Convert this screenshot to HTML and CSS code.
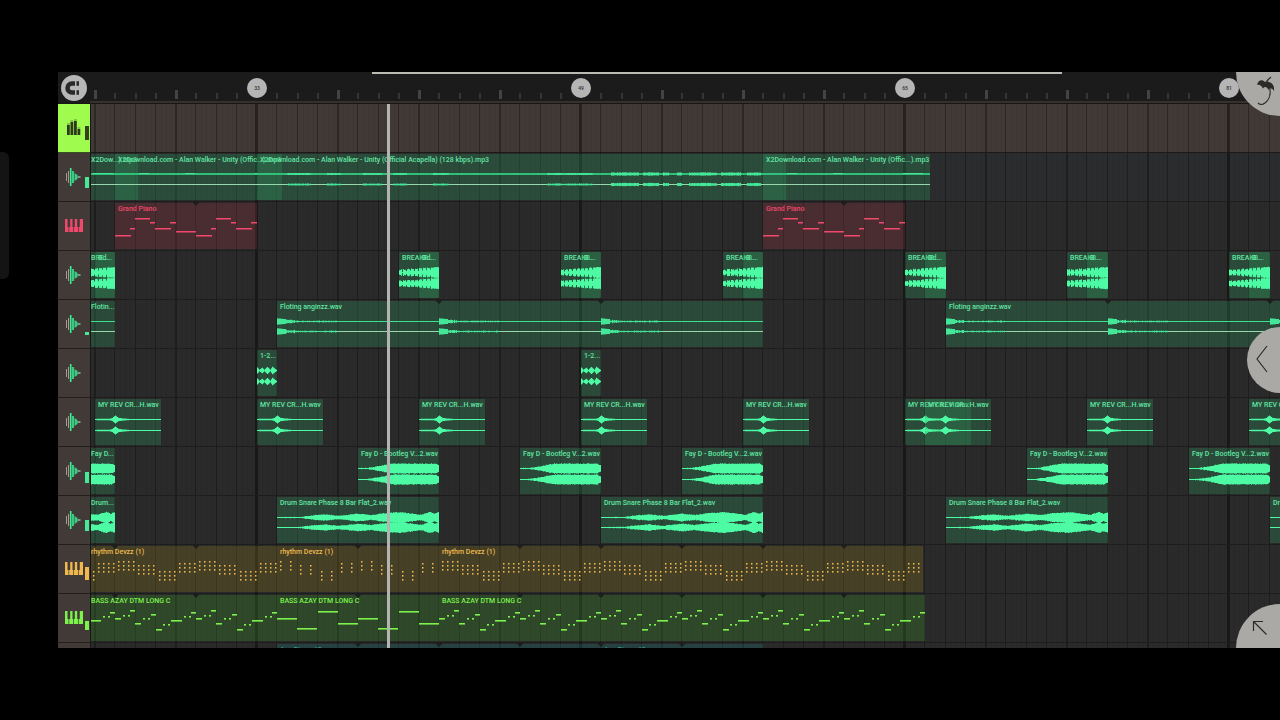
FILE: index.html
```html
<!DOCTYPE html>
<html lang="en">
<head>
<meta charset="utf-8">
<meta name="viewport" content="width=device-width, initial-scale=1">
<title>Playlist</title>
<link rel="stylesheet" href="styles.css">
</head>
<body>
<div class="edge-handle"></div>
<main class="app">
  <header class="ruler">
    <button class="snap" type="button" aria-label="Snap">
      <svg viewBox="0 0 26 26" width="26" height="26" aria-hidden="true">
        <path d="M14 8.500H11a4.500 4.500 0 0 0 0 9H14" fill="none" stroke="#2a2a2a" stroke-width="4.500"/>
        <path d="M15.500 6.200h2.500v4.600h-2.500zM15.500 15.200h2.500v4.600h-2.500z" fill="#2a2a2a"/>
      </svg>
    </button>
    <div class="timeline" id="timeline"></div>
    <div class="overview"></div>
  </header>
  <section class="tracks" id="tracks"></section>
  <div class="playhead"></div>
  <button class="corner corner-top" type="button" aria-label="Tools">
    <svg viewBox="0 0 24 32" width="24" height="32" aria-hidden="true">
      <path d="M3 9C4 4 8 3 11 6C15 5 21 7 20 15C18 12 16 12 14.500 14C13 11 11 10 9 12.500C7.500 9 5 8 3 9Z" fill="#2d2b2a"/>
      <path d="M17 1q-4 3-5 6M16 13c1 7-2 12-5 14q-4 3-7 0" fill="none" stroke="#2d2b2a" stroke-width="1.200"/>
    </svg>
  </button>
  <button class="corner corner-mid" type="button" aria-label="Open panel">
    <svg viewBox="0 0 12 28" width="12" height="28" aria-hidden="true"><path d="M11 1L1 14L11 27" fill="none" stroke="#2d2b2a" stroke-width="1.200"/></svg>
  </button>
  <button class="corner corner-bottom" type="button" aria-label="Zoom">
    <svg viewBox="0 0 16 16" width="16" height="16" aria-hidden="true"><path d="M1.500 11V1.500H11M1.500 1.500L14.500 14.500" fill="none" stroke="#2d2b2a" stroke-width="1.200"/></svg>
  </button>
</main>
<script src="playlist.js"></script>
</body>
</html>
```
FILE: styles.css
```css
* { box-sizing: border-box; }

body {
  margin: 0;
  height: 100vh;
  padding: 72px 0 72px 58px;
  background: #000;
  font-family: Roboto, "Liberation Sans", sans-serif;
  overflow: hidden;
}

button { border: 0; padding: 0; margin: 0; background: none; color: inherit; font: inherit; cursor: pointer; }
svg { display: block; }

.edge-handle {
  position: absolute;
  left: 0;
  top: 152px;
  width: 9px;
  height: 127px;
  border-radius: 0 6px 6px 0;
  background: #141414;
}

.app {
  position: relative;
  display: flex;
  flex-direction: column;
  height: 100%;
  overflow: hidden;
  background: #292929;
}

/* Ruler */
.ruler {
  position: relative;
  display: flex;
  flex: 0 0 32px;
  background: #1b1b1b;
  border-bottom: 1px solid #1a1614;
}
.snap {
  flex: 0 0 26px;
  height: 26px;
  margin: 3px 3px 0 3px;
  border-radius: 50%;
  background: #b7b7b7;
}
.timeline {
  position: relative;
  flex: 1;
  overflow: hidden;
  border-bottom: 2px solid #38302d;
}
.timeline svg { position: absolute; left: 0; top: 0; }
.marker {
  position: absolute;
  top: 6px;
  width: 20px;
  height: 20px;
  margin-left: -10px;
  border-radius: 50%;
  background: #b5b5b5;
  color: #333;
  font-size: 5px;
  font-weight: 500;
  line-height: 20px;
  text-align: center;
}
.overview {
  position: absolute;
  left: 314px;
  right: 218px;
  top: 0;
  height: 2px;
  background: #b9bab2;
}

/* Tracks */
.tracks { flex: 1; min-height: 0; overflow: hidden; }
.track { display: flex; height: 49px; }
.head {
  display: flex;
  flex: 0 0 32px;
  background: #423a37;
  border-bottom: 1px solid #241f1d;
}
.icon { flex: 0 0 27px; height: 48px; }
.icon svg { margin-left: 7px; }
.meter { width: 4px; background: currentColor; }
.lane {
  position: relative;
  flex: 1;
  overflow: hidden;
  background: #2a2a2a;
  border-bottom: 1px solid #1d1d1d;
  border-left: 1px solid #171717;
}
.grid { position: absolute; left: -1px; top: 0; }

.master .head { background: #9ffc4e; color: #33401c; border-bottom-color: #35511d; }
.master .lane { background: #403935; border-bottom-color: #1c1917; }
.first .lane { background: #2a2c2d; }

.audio { color: #45e99a; }
.piano-red { color: #f0486c; }
.piano-gold { color: #f0b94e; }
.piano-lime { color: #7cf24c; }
.teal { color: #2fa695; }

.clip { position: absolute; top: 1px; height: 46px; }
.clip svg { position: absolute; left: 0; top: 0; }
.audio .clip { background: rgba(45, 150, 92, 0.3); }
.piano-red .clip { background: rgba(200, 62, 75, 0.2); }
.piano-gold .clip { background: rgba(144, 126, 28, 0.28); }
.piano-lime .clip { background: rgba(60, 150, 40, 0.28); }
.teal .clip { background: rgba(30, 120, 115, 0.3); }
.label {
  position: relative;
  display: block;
  font-size: 7px;
  font-weight: 500;
  line-height: 13px;
  white-space: nowrap;
}
.audio .label { color: #62e5a4; }

.playhead {
  position: absolute;
  left: 329px;
  top: 32px;
  bottom: 0;
  width: 3px;
  background: #b3b3b1;
}

/* Floating corner controls */
.corner {
  position: absolute;
  border-radius: 50%;
  background: #aba9a6;
}
.corner svg { position: absolute; }
.corner-top { width: 88px; height: 88px; right: -44px; top: -44px; }
.corner-top svg { left: 18px; top: 48px; }
.corner-mid { width: 66px; height: 66px; right: -33px; top: 255px; }
.corner-mid svg { left: 9px; top: 18px; }
.corner-bottom { width: 88px; height: 88px; right: -44px; bottom: -44px; }
.corner-bottom svg { left: 16px; top: 16px; }
```
FILE: playlist.js
```js
// One bar is 81/4 px wide; bar 0 of the visible range sits 167px into the lane.
const ORIGIN = 167;
const BAR = 81 / 4;
const MAX_BAR = 200;
const px = bar => Math.round(ORIGIN + bar * BAR);

let seed = 7;
const rnd = () => (seed = (seed * 16807) % 2147483647) / 2147483647;

const svg = (w, h, body, cls = '') =>
  `<svg class="${cls}" width="${w}" height="${h}" aria-hidden="true">${body}</svg>`;
const rect = (x, y, w, h, fill = 'currentColor') =>
  `<rect x="${x}" y="${y}" width="${w}" height="${h}" fill="${fill}"/>`;

function grid() {
  let s = '';
  for (let b = -8; b < MAX_BAR; b++) {
    const x = px(b);
    for (let q = 1; q < 4; q++) s += rect(x + q * 5, 0, 1, 49, 'rgba(0,0,0,.04)');
    if (b % 16 === 0) s += rect(x - 2, 0, 3, 49, 'rgba(0,0,0,.42)');
    else if (b % 4 === 0) s += rect(x - 1, 0, 2, 49, 'rgba(0,0,0,.3)');
    else s += rect(x - 1, 0, 1, 49, 'rgba(0,0,0,.3)');
  }
  return svg(4200, 49, s, 'grid');
}

function ticks() {
  let s = '';
  for (let b = -8; b < MAX_BAR; b++) {
    if (b % 16 === 0) continue;
    s += b % 4 === 0 ? rect(px(b) - 1, 18, 3, 9, '#434343') : rect(px(b) - 1, 21, 2, 6, '#363636');
  }
  return svg(4200, 30, s);
}

// Vertical strokes for both channels; amp(x) is the half height at x.
function wave(w, amp, rough = 0, c1 = 20, c2 = 31) {
  let d = '';
  for (let x = 0; x < w; x++) {
    for (const c of [c1, c2]) {
      const a = Math.max(0.6, amp(x) - rnd() * rough);
      d += `M${x + 0.5} ${c + 0.5 - a}v${(a * 2).toFixed(2)}`;
    }
  }
  return `<path d="${d}" stroke="#4cfba3" stroke-width="1.1" fill="none"/>`;
}

function env(points) {
  return x => {
    for (let i = 1; i < points.length; i++) {
      const [x0, y0] = points[i - 1], [x1, y1] = points[i];
      if (x <= x1) return y0 + (y1 - y0) * (x - x0) / (x1 - x0);
    }
    return points[points.length - 1][1];
  };
}

const flat = w => rect(0, 20, w, 1, '#3de08c') + rect(0, 30, w, 1, '#98d6ab');

const loud = [[30, 54], [70, 84], [106, 125], [136, 150], [176, 192], [290, 336],
  [354, 382], [386, 402], [406, 412], [420, 425], [432, 460], [464, 484], [490, 504]];
const draw = {
  vocal(w, long) {
    let s = rect(0, 19, w, 2, '#2fc079') + rect(0, 30, w, 1, '#98d6ab');
    if (long) for (const [a, b] of loud) for (let x = a; x < b; x++) {
      const h = a > 340 ? 2.4 + rnd() : 1.2 + rnd();
      s += rect(x, 20 - h / 2, 1, h, '#43e797') + rect(x, 30.5 - h / 2, 1, h, '#43e797');
    }
    else for (const x of [24, 70, 140, 150]) if (x < w) s += rect(x, 19, 10, 1, '#43e797');
    return s;
  },
  hits(w) {
    return wave(w, x => {
      const p = w > 21 ? x : x + 20;
      const peak = 3.2 + p * 0.065;
      return p > 33 ? peak : p % 4 < 3 ? peak : 1.4 + p * 0.05;
    }, 1, 20, 31);
  },
  pads(w) {
    let s = flat(w);
    for (let o = 0; o < w; o += 162) {
      const n = Math.min(60, w - o);
      let d = '';
      for (let x = 0; x < n; x++) for (const c of [20.5, 30.5]) {
        const a = x < 9 ? 3.2 - x * 0.1 : x < 18 ? 0.8 + rnd() : 0.4 + rnd() * 0.5;
        d += `M${o + x + 0.5} ${c - a}v${(a * 2).toFixed(2)}`;
      }
      s += `<path d="${d}" stroke="#43e797" stroke-width="1.1" fill="none"/>`;
    }
    return s;
  },
  plain: w => flat(w),
  blips(w) {
    const e = env([[0, 3], [2, .8], [5, 2.8], [7, .8], [10, 3.6], [13, .8], [15, 3.8], [19, .8]]);
    return wave(w, e);
  },
  swell(w) {
    return wave(w, env([[0, .6], [14, .8], [17, 1.6], [20, 4], [23, 1.8], [26, 1.2], [34, .6], [66, .6]]));
  },
  riser(w) {
    return wave(w, env([[0, .6], [8, .8], [18, 2.2], [26, 3.8], [34, 5.2], [77, 5.2], [80, 3.6]]), .7);
  },
  snare(w) {
    return wave(w, env([[0, .6], [22, .8], [34, 2.4], [48, 3.4], [62, 2], [80, 4.2], [94, 2.8],
      [106, 4.6], [122, 5.6], [132, 4.6], [144, 3], [153, 6], [157, 4], [161, 5.6]]), .7, 20, 30);
  },
  melody(w) {
    return [[0, 16, 33], [15, 5, 26], [20, 15, 16], [35, 5, 20], [40, 16, 26], [55, 6, 20], [61, 20, 29],
      [81, 16, 33], [96, 5, 26], [101, 15, 16], [116, 5, 20], [121, 16, 26], [136, 6, 20]]
      .map(([x, l, y]) => rect(x, y - 1, l, 1.5)).join('');
  },
  chords(w, sparse) {
    const tops = [15, 19, 25, 17];
    const step = sparse ? 2 : 4;
    let s = '';
    for (let i = 0; ; i++) {
      const bar = Math.floor(i / step);
      const x = Math.round(bar * BAR) + 3 + (i % step) * (20 / step);
      if (x > w - 2) break;
      const t = tops[bar % 4];
      for (const y of [t, t + 4, t + 8]) s += rect(x, y, 1.5, 1.6);
    }
    return s;
  },
  bass(w, sparse) {
    const notes = sparse
      ? [[0, 20, 23], [20, 20, 33], [41, 20, 16], [61, 20, 28]]
      : [[0, 6, 23], [8, 2, 20], [13, 2, 20], [15, 5, 15], [20, 6, 28], [28, 2, 23], [33, 2, 23], [36, 5, 19],
         [41, 6, 34], [48, 2, 29], [53, 2, 29], [56, 11, 25], [69, 2, 21], [74, 2, 21], [76, 5, 17]];
    let s = '';
    for (let o = 0; o < w; o += 81)
      for (const [x, l, y] of notes) if (o + x < w) s += rect(o + x, y, Math.min(l, w - o - x), 1.6);
    return s;
  }
};

const WAVE_ICON = `<svg viewBox="0 0 18 48" width="18" height="48" aria-hidden="true">
<path d="M1.500 20v8M3.500 18v12" stroke="#a39b94"/><path d="M5.700 15v18" stroke="#3dee95" stroke-width="1.600"/>
<path d="M8 18v12" stroke="#3dee95" stroke-width="1.600"/><path d="M9.500 20l3 2v4l-3 2z" fill="#35cf86"/><path d="M12.500 23h3v2h-3z" fill="#7b9a86"/></svg>`;
const KEYS_ICON = `<svg viewBox="0 0 18 48" width="18" height="48" aria-hidden="true">
<path d="M0 17h2.500v8h1v5H0zM4.200 30v-5h1V17h2.300v8h.8v5zM9 30v-5h.8V17h2.400v8h1v5zM13.900 30v-5h.9V17H18v13z" fill="currentColor"/></svg>`;
const MIX_ICON = `<svg viewBox="0 0 18 48" width="18" height="48" aria-hidden="true">
<path d="M2 21h2.800v10H2zM5.500 18h2.800v13H5.500zM9 17h2.800v14H9zM12.500 25h2.800v6h-2.800z" fill="#2d391b"/>
<path d="M2 20h2.800M5.500 17h2.800M9 16h2.800M12.500 24h2.800" stroke="#5f8a35"/></svg>`;

const every = (starts, len, label, how) => starts.map(b => ({ at: b, len, label, how }));
const longName = 'X2Download.com - Alan Walker - Unity (Official Acapella) (128 kbps).mp3';
const shortName = 'X2Download.com - Alan Walker - Unity (Offic...).mp3';
const breaks = [7, 15, 23, 32, 40, 48];
const bassName = 'BASS AZAY DTM LONG C';

const tracks = [
  { cls: 'master', name: 'Mixer', icon: MIX_ICON, meter: [22, 14], clips: [] },
  { cls: 'audio first', name: 'Vocals', icon: WAVE_ICON, meter: [24, 11], clips: [
    { at: -15, len: 9.1, label: 'X2Dow...).mp3', how: 'vocal' },
    { at: -7, len: 8.25, label: shortName, how: 'vocal' },
    { at: 0, len: 26.1, label: longName, how: 'vocal', alt: true },
    { at: 25, len: 8.25, label: shortName, how: 'vocal' }] },
  { cls: 'piano-red', name: 'Grand Piano', icon: KEYS_ICON,
    clips: every([-7, 25], 7, 'Grand Piano', 'melody'), marks: [-3, 29] },
  { cls: 'audio', name: 'Break', icon: WAVE_ICON, clips: [
    { at: -9, len: 2, label: 'BRE...', how: 'hits' }, { at: -8, len: 1, label: 'Bd...', how: 'hits' },
    ...breaks.flatMap(b => [{ at: b, len: 2, label: 'BREAKB...', how: 'hits' },
      { at: b + 1, len: 1, label: b === 7 || b === 32 ? 'Bd...' : 'B...', how: 'hits' }])] },
  { cls: 'audio', name: 'Floting', icon: WAVE_ICON, meter: [32, 3], marks: [9, 17, 42, 50], clips: [
    { at: -15, len: 8, label: 'Flotin...', how: 'plain' },
    ...every([1, 34], 24, 'Floting anginzz.wav', 'pads')] },
  { cls: 'audio', name: 'One shot', icon: WAVE_ICON, clips: every([0, 16], 1, '1-2...', 'blips') },
  { cls: 'audio', name: 'Reverse crash', icon: WAVE_ICON,
    clips: every([-8, 0, 8, 16, 24, 32, 33, 41, 49], 3.25, 'MY REV CR...H.wav', 'swell') },
  { cls: 'audio', name: 'Fay D', icon: WAVE_ICON, meter: [25, 11], clips: [
    { at: -11, len: 4, label: 'Fay D...', how: 'riser' },
    ...every([5, 13, 21, 38, 46], 4, 'Fay D - Bootleg V...2.wav', 'riser')] },
  { cls: 'audio', name: 'Drum snare', icon: WAVE_ICON, meter: [24, 11], clips: [
    { at: -15, len: 8, label: 'Drum...', how: 'snare' },
    ...every([1, 17, 34, 50], 8, 'Drum Snare Phase 8 Bar Flat_2.wav', 'snare')] },
  { cls: 'piano-gold', name: 'Rhythm', icon: KEYS_ICON, meter: [22, 13], marks: [-7, -3, 5, 13, 17, 21, 25, 29],
    clips: [{ at: -15, len: 16, label: 'rhythm Devzz (1)', how: 'chords' },
      { at: 1, len: 8, label: 'rhythm Devzz (1)', how: 'chords', alt: true },
      { at: 9, len: 23.9, label: 'rhythm Devzz (1)', how: 'chords' }] },
  { cls: 'piano-lime', name: 'Bass', icon: KEYS_ICON, meter: [27, 9], marks: [-7, -3, 5, 13, 17, 21, 25, 29],
    clips: [{ at: -15, len: 16, label: bassName, how: 'bass' },
      { at: 1, len: 8, label: bassName, how: 'bass', alt: true },
      { at: 9, len: 24, label: bassName, how: 'bass' }] },
  { cls: 'teal', name: 'Piano', icon: '', marks: [5, 9, 13, 17, 21],
    clips: [{ at: 1, len: 16, label: 'Ace Piano #2', how: null }, { at: 17, len: 8, label: 'Ace Piano #2', how: null }] }
];

function clipHtml(c) {
  const left = px(c.at) - 1, w = px(c.at + c.len) - px(c.at);
  const pad = Math.max(3, -left);
  const art = c.how ? svg(w, 46, draw[c.how](w, c.alt)) : '';
  return `<div class="clip" style="left:${left}px;width:${w}px">${art}<span class="label" style="padding-left:${pad}px">${c.label}</span></div>`;
}

const gridSvg = grid();
document.getElementById('tracks').innerHTML = tracks.map(t => {
  const marks = (t.marks || []).map(b => `<path d="M${px(b) - 3} 0h6v1l-3 3l-3-3z" fill="#1d1f1c"/>`).join('');
  const meter = t.meter ? `<span class="meter" style="margin-top:${t.meter[0]}px;height:${t.meter[1]}px"></span>` : '';
  return `<div class="track ${t.cls}"><div class="head"><button class="icon" type="button" aria-label="${t.name}">${t.icon}</button>${meter}</div>
<div class="lane">${gridSvg}${t.clips.map(clipHtml).join('')}${svg(4200, 6, marks, 'grid')}</div></div>`;
}).join('');

document.getElementById('timeline').innerHTML = ticks() +
  [0, 16, 32, 48].map(b => `<span class="marker" style="left:${px(b)}px">${b + 33}</span>`).join('');
```
